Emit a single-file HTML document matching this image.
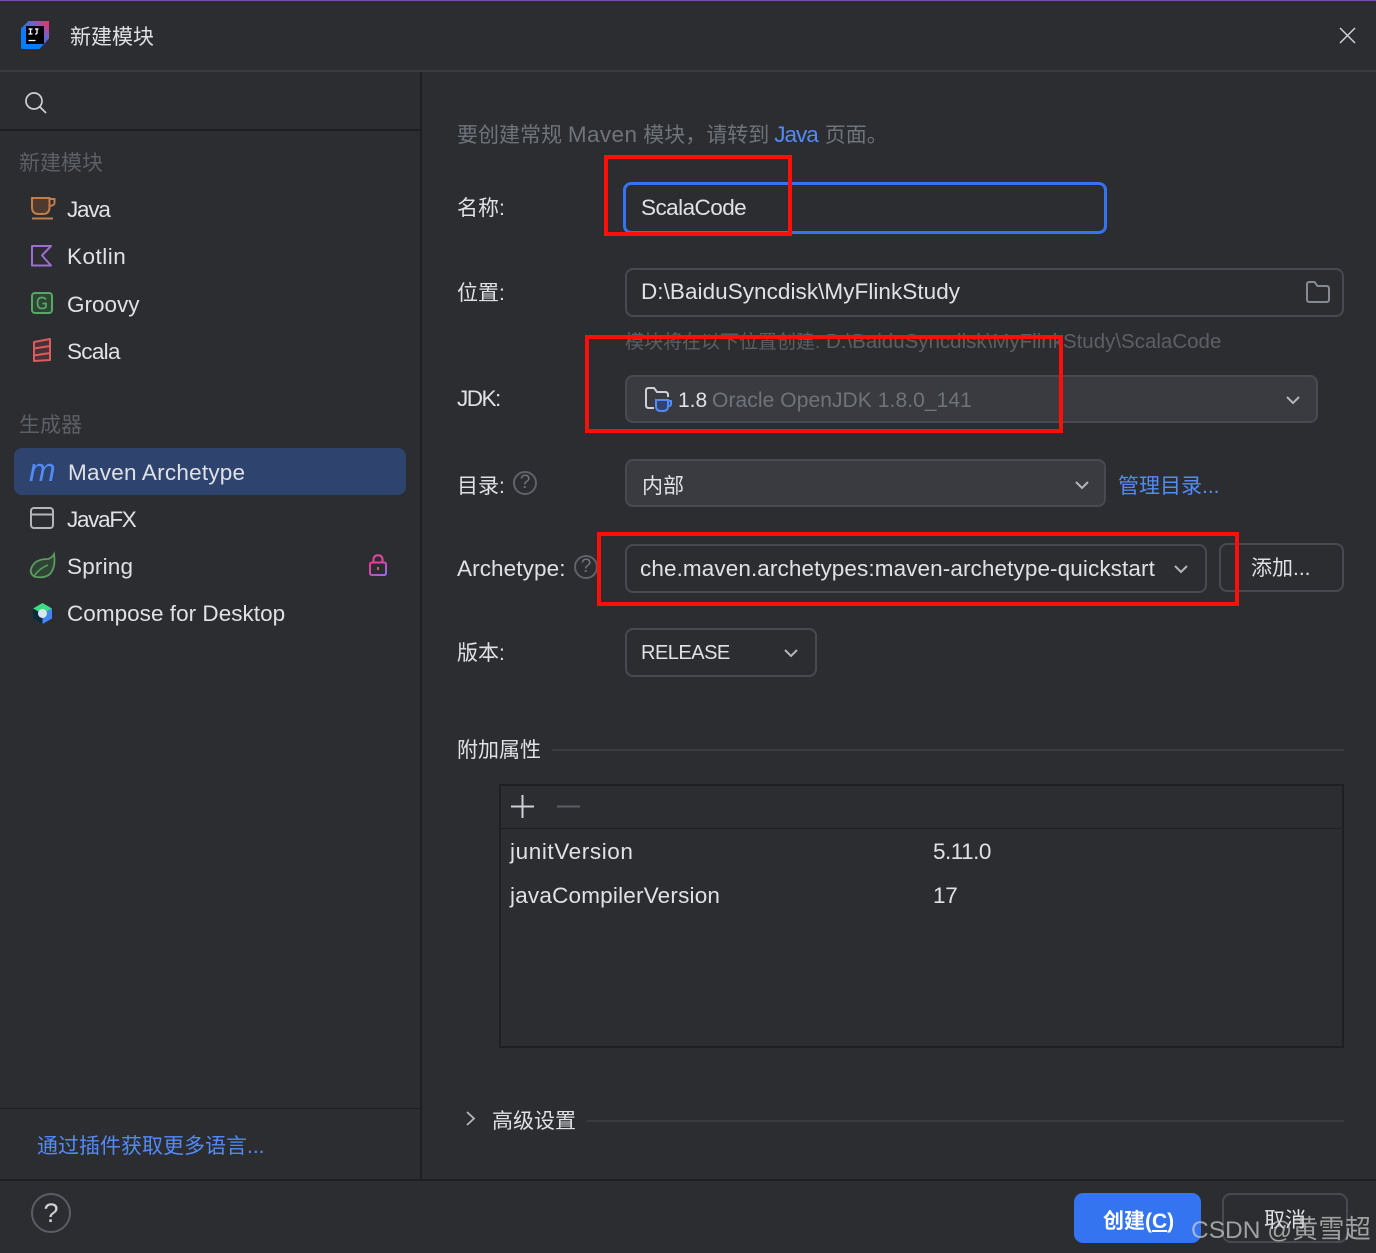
<!DOCTYPE html>
<html lang="zh"><head><meta charset="utf-8"><title>新建模块</title>
<style>
html,body{margin:0;padding:0;background:#2b2d30}
#p{position:relative;width:1376px;height:1253px;overflow:hidden;background:#2b2d30;font-family:"Liberation Sans","Noto Sans CJK SC",sans-serif;color:#dfe1e5;font-size:22.5px;letter-spacing:.2px}
.t{position:absolute;white-space:nowrap;height:30px;line-height:30px}
.z{font-size:21px;letter-spacing:0}
.m{color:#6f737a}.d{color:#5c5f65}.b{color:#548af7}
.l{position:absolute}
.x{position:absolute;box-sizing:border-box;border:2px solid #474a50;border-radius:8px}
.f{background:#393b40}
.r{position:absolute;box-sizing:border-box;border:4px solid #fa0f0a}
svg{position:absolute;overflow:visible;fill:none}
</style></head><body><div id="p">
<div class="l" style="left:0;top:0;width:1376px;height:1px;background:#7a4fa8"></div>
<div class="l" style="left:0;top:70px;width:1376px;height:2px;background:#393b40"></div>
<div class="l" style="left:0;top:129px;width:420px;height:2px;background:#1e1f22"></div>
<div class="l" style="left:420px;top:72px;width:2px;height:1108px;background:#1e1f22"></div>
<div class="l" style="left:0;top:1108px;width:420px;height:1px;background:#1e1f22"></div>
<div class="l" style="left:0;top:1179px;width:1376px;height:2px;background:#1e1f22"></div>

<!-- title -->
<svg style="left:21px;top:21px" width="28" height="28" viewBox="0 0 28 28">
<defs><linearGradient id="g" x1="0" y1="1" x2="1" y2="0"><stop offset=".35" stop-color="#087cfa"/><stop offset=".7" stop-color="#7a5fc0"/><stop offset="1" stop-color="#fe2857"/></linearGradient></defs>
<path d="M0 7.500 7.500 0H28V17.500L18.500 28H1.500Q0 28 0 26.500Z" fill="url(#g)"/>
<rect x="5" y="5" width="18" height="18" fill="#000"/>
<path d="M7.500 8h4M9.500 8v5M7.500 13h4M14 8h3.500M16 8v4q0 1.200-2 1M7.500 19.500h7" stroke="#fff" stroke-width="1.300"/></svg>
<div class="t z" style="left:70px;top:23px;color:#dfe1e5">新建模块</div>
<svg style="left:1339px;top:27px" width="17" height="17"><path d="M1 1 16 16M16 1 1 16" stroke="#ced0d6" stroke-width="1.500"/></svg>

<!-- search -->
<svg style="left:25px;top:92px" width="21" height="21"><circle cx="9" cy="9" r="8" stroke="#ced0d6" stroke-width="1.700"/><path d="M15 15 21 21" stroke="#ced0d6" stroke-width="1.700"/></svg>

<!-- sidebar -->
<div class="t z d" style="left:19px;top:149px">新建模块</div>
<svg style="left:31px;top:197px" width="25" height="24"><path d="M1 1H18.500V10Q18.500 17 12 17H7.500Q1 17 1 10Z" fill="#4f3a2e" stroke="#c27d4a" stroke-width="2"/><path d="M18.500 2H23.500V6Q23.500 8.500 18.500 9" stroke="#c27d4a" stroke-width="2"/><path d="M1 21.500H22" stroke="#c27d4a" stroke-width="2"/></svg>
<div class="t" style="left:67px;top:195px;letter-spacing:-1.200px">Java</div>
<svg style="left:31px;top:245px" width="22" height="22"><path d="M1 1H20L11 10.500 20 20.500H1Z" stroke="#9b6ed0" stroke-width="2" stroke-linejoin="round"/></svg>
<div class="t" style="left:67px;top:242px;letter-spacing:.5px">Kotlin</div>
<svg style="left:31px;top:292px" width="22" height="22"><rect x="1" y="1" width="20" height="20" rx="3" fill="#2f4433" stroke="#55a76a" stroke-width="2"/><path d="M15 7.500Q13.500 5.500 11 5.500 6.500 5.500 6.500 11T11 16.500Q13.500 16.500 15 15V11.500H11.500" stroke="#55a76a" stroke-width="1.700"/></svg>
<div class="t" style="left:67px;top:290px;letter-spacing:0">Groovy</div>
<svg style="left:33px;top:338px" width="18" height="24"><path d="M1 4 17 1V8L1 10.500ZM1 10.500 17 8V15L1 17.500ZM1 17.500 17 15V22L1 23Z" fill="#4a3136" stroke="#db5c5c" stroke-width="2" stroke-linejoin="round"/></svg>
<div class="t" style="left:67px;top:337px;letter-spacing:-.7px">Scala</div>
<div class="t z d" style="left:19px;top:411px">生成器</div>
<div class="l" style="left:14px;top:448px;width:392px;height:47px;background:#2e436e;border-radius:8px"></div>
<div class="t" style="left:29px;top:455px;font:italic 32px/30px 'Liberation Sans',sans-serif;color:#548af7;letter-spacing:0;height:30px">m</div>
<div class="t" style="left:68px;top:458px;letter-spacing:.23px">Maven Archetype</div>
<svg style="left:30px;top:507px" width="24" height="22"><rect x="1" y="1" width="22" height="20" rx="3" stroke="#b4b6bb" stroke-width="2"/><path d="M1 7.500H23" stroke="#b4b6bb" stroke-width="2"/></svg>
<div class="t" style="left:67px;top:505px;letter-spacing:-1.300px">JavaFX</div>
<svg style="left:30px;top:553px" width="25" height="25"><path d="M24 1Q22 5 18 6 7 6 3 12-2 19 4 23.500 14 26 20 21 26 14 24 1Z" fill="#2f4433" stroke="#5b9a63" stroke-width="1.800"/><path d="M4 23Q10 15 18 12" stroke="#5b9a63" stroke-width="1.500"/></svg>
<div class="t" style="left:67px;top:552px;letter-spacing:.2px">Spring</div>
<svg style="left:369px;top:554px" width="18" height="22"><defs><linearGradient id="k" x1="0" y1="0" x2="1" y2="1"><stop offset="0" stop-color="#ff318c"/><stop offset="1" stop-color="#8f6cf0"/></linearGradient></defs><path d="M1 10.500Q1 8.500 3 8.500H15Q17 8.500 17 10.500V19Q17 21 15 21H3Q1 21 1 19Z" stroke="url(#k)" stroke-width="2"/><path d="M4.500 8.500V6Q4.500 1.200 9 1.200T13.500 6V8.500" stroke="#e0489f" stroke-width="2"/><path d="M9 13V16" stroke="#e0489f" stroke-width="2"/></svg>
<svg style="left:33px;top:603px" width="19" height="21"><path d="M9.500 0 19 5.500 9.500 11 0 5.500Z" fill="#3ddc84"/><path d="M0 5.500 9.500 11V21L0 15.500Z" fill="#0b2b3d"/><path d="M19 5.500 9.500 11V21L19 15.500Z" fill="#4285f4"/><circle cx="9.500" cy="10.500" r="4.500" fill="#d8e6ee"/></svg>
<div class="t" style="left:67px;top:599px;letter-spacing:.03px">Compose for Desktop</div>
<div class="t z b" style="left:37px;top:1132px;font-size:21px">通过插件获取更多语言...</div>

<!-- form -->
<div class="t z m" style="left:457px;top:120px">要创建常规 <span style="font-size:22.5px;letter-spacing:.4px">Maven</span> 模块，请转到<span class="b" style="font-size:22.5px;letter-spacing:-1px;margin-left:5px">Java</span><span style="margin-left:7px">页面。</span></div>

<div class="t z" style="left:457px;top:194px">名称:</div>
<div class="x" style="left:623px;top:182px;width:484px;height:52px;border:3px solid #3574f0"></div>
<div class="t" style="left:641px;top:193px;letter-spacing:-.55px">ScalaCode</div>

<div class="t z" style="left:457px;top:279px">位置:</div>
<div class="x" style="left:625px;top:268px;width:719px;height:49px"></div>
<div class="t" style="left:641px;top:277px;letter-spacing:.05px">D:\BaiduSyncdisk\MyFlinkStudy</div>
<svg style="left:1306px;top:281px" width="24" height="22"><path d="M1 3.500Q1 1 3.500 1H8.500L11.500 5H20.500Q23 5 23 7.500V18.500Q23 21 20.500 21H3.500Q1 21 1 18.500Z" stroke="#868a91" stroke-width="2"/></svg>
<div class="t d" style="left:625px;top:327px;font-size:20.500px;letter-spacing:0"><span style="font-size:19px">模块将在以下位置创建:</span> D:\BaiduSyncdisk\MyFlinkStudy\ScalaCode</div>

<div class="t" style="left:457px;top:384px;letter-spacing:-1.500px">JDK:</div>
<div class="x f" style="left:625px;top:375px;width:693px;height:48px"></div>
<svg style="left:645px;top:387px" width="27" height="26"><path d="M1 3.500Q1 1 3.500 1H9L12 5H20Q23 5 23 8V10M1 3.500V18Q1 21 3.500 21H9" stroke="#ced0d6" stroke-width="2"/><path d="M11 13H23V19Q23 24 18 24H16Q11 24 11 19ZM23 14H26V17Q26 19 23 19.500" fill="#2e436e" stroke="#548af7" stroke-width="2"/></svg>
<div class="t" style="left:678px;top:386px;font-size:21px;letter-spacing:0">1.8 <span style="color:#6f737a;margin-left:-1px;letter-spacing:.08px">Oracle OpenJDK 1.8.0_141</span></div>
<svg style="left:1286px;top:396px" width="14" height="9"><path d="M1 1 7 7 13 1" stroke="#b4b6bb" stroke-width="2"/></svg>

<div class="t z" style="left:457px;top:472px">目录:</div>
<svg style="left:513px;top:471px" width="24" height="24"><circle cx="12" cy="12" r="11" stroke="#5f6268" stroke-width="2"/></svg>
<div class="t m" style="left:513px;top:468px;width:24px;text-align:center;font-size:19px;letter-spacing:0">?</div>
<div class="x f" style="left:625px;top:459px;width:481px;height:48px"></div>
<div class="t z" style="left:642px;top:472px">内部</div>
<svg style="left:1075px;top:481px" width="14" height="9"><path d="M1 1 7 7 13 1" stroke="#b4b6bb" stroke-width="2"/></svg>
<div class="t z b" style="left:1118px;top:472px">管理目录...</div>

<div class="t" style="left:457px;top:554px;letter-spacing:.1px">Archetype:</div>
<svg style="left:574px;top:555px" width="24" height="24"><circle cx="12" cy="12" r="11" stroke="#5f6268" stroke-width="2"/></svg>
<div class="t m" style="left:574px;top:552px;width:24px;text-align:center;font-size:19px;letter-spacing:0">?</div>
<div class="x" style="left:625px;top:544px;width:582px;height:49px"></div>
<div class="t" style="left:640px;top:554px;letter-spacing:.1px">che.maven.archetypes:maven-archetype-quickstart</div>
<svg style="left:1174px;top:565px" width="14" height="9"><path d="M1 1 7 7 13 1" stroke="#b4b6bb" stroke-width="2"/></svg>
<div class="x" style="left:1219px;top:543px;width:125px;height:49px"></div>
<div class="t z" style="left:1251px;top:554px">添加...</div>

<div class="t z" style="left:457px;top:639px">版本:</div>
<div class="x" style="left:625px;top:628px;width:192px;height:49px"></div>
<div class="t" style="left:641px;top:638px;font-size:20px;letter-spacing:-.5px">RELEASE</div>
<svg style="left:784px;top:649px" width="14" height="9"><path d="M1 1 7 7 13 1" stroke="#b4b6bb" stroke-width="2"/></svg>

<div class="t z" style="left:457px;top:736px">附加属性</div>
<div class="l" style="left:552px;top:749px;width:792px;height:2px;background:#393b40"></div>
<div class="l" style="left:499px;top:784px;width:845px;height:264px;box-sizing:border-box;border:2px solid #1e1f22"></div>
<div class="l" style="left:501px;top:828px;width:841px;height:1px;background:#1e1f22"></div>
<svg style="left:511px;top:795px" width="70" height="23"><path d="M0 11.500H23M11.500 0V23" stroke="#ced0d6" stroke-width="2"/><path d="M46 11.500H69" stroke="#5a5d63" stroke-width="2"/></svg>
<div class="t" style="left:510px;top:837px;letter-spacing:.6px">junitVersion</div>
<div class="t" style="left:933px;top:837px;letter-spacing:-.5px">5.11.0</div>
<div class="t" style="left:510px;top:881px;letter-spacing:.2px">javaCompilerVersion</div>
<div class="t" style="left:933px;top:881px;letter-spacing:-.3px">17</div>

<svg style="left:466px;top:1111px" width="9" height="15"><path d="M1 1 8 7.500 1 14" stroke="#b4b6bb" stroke-width="1.800"/></svg>
<div class="t z" style="left:492px;top:1107px">高级设置</div>
<div class="l" style="left:587px;top:1120px;width:757px;height:2px;background:#393b40"></div>

<!-- footer -->
<svg style="left:31px;top:1193px" width="40" height="40"><circle cx="20" cy="20" r="19" stroke="#5a5d63" stroke-width="2"/></svg>
<div class="t" style="left:31px;top:1198px;width:40px;text-align:center;font-size:27px;letter-spacing:0;color:#ced0d6">?</div>
<div class="l" style="left:1074px;top:1193px;width:127px;height:50px;background:#3574f0;border-radius:9px"></div>
<div class="t" style="left:1103px;top:1207px;font-size:21px;letter-spacing:0;font-weight:700;color:#fff">创建(<span style="text-decoration:underline">C</span>)</div>
<div class="x" style="left:1222px;top:1193px;width:126px;height:50px;border-radius:9px"></div>
<div class="t z" style="left:1264px;top:1206px">取消</div>
<div class="t" style="left:1191px;top:1214px;font-size:24.500px;letter-spacing:0;color:rgba(205,205,205,.72)">CSDN @<span style="font-size:26px;letter-spacing:.3px">黄雪超</span></div>

<!-- annotations -->
<div class="r" style="left:604px;top:155px;width:188px;height:81px"></div>
<div class="r" style="left:585px;top:335px;width:478px;height:98px"></div>
<div class="r" style="left:597px;top:532px;width:642px;height:74px"></div>
</div></body></html>
